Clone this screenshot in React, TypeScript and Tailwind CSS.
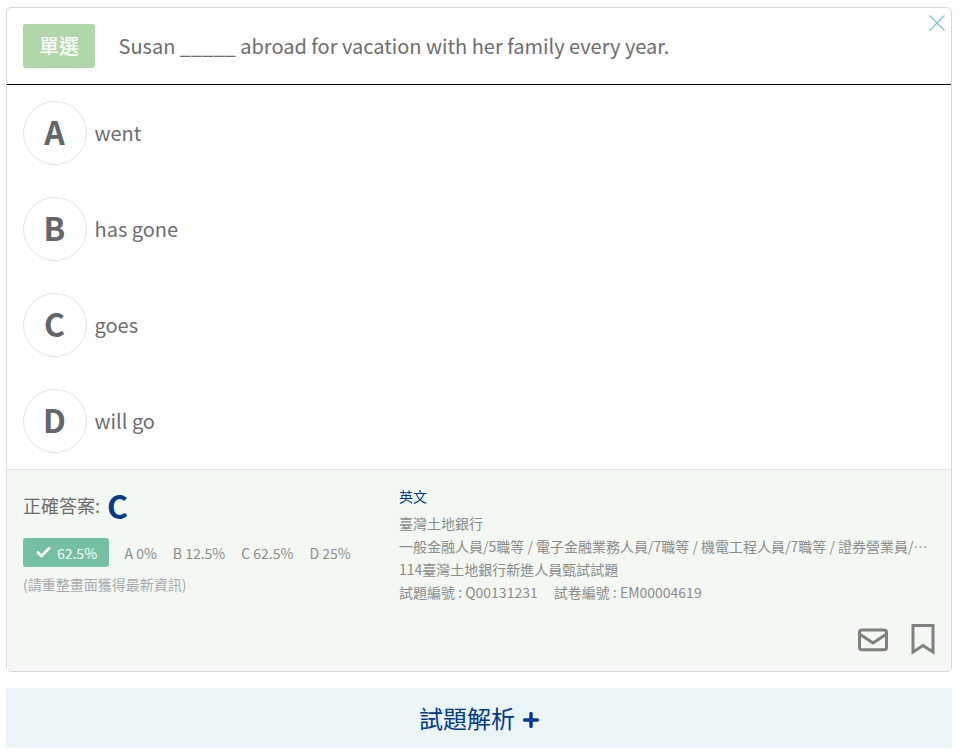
import React from 'react';
import { Check, Plus } from 'lucide-react';

const OPTIONS = [
  { key: 'A', text: 'went' },
  { key: 'B', text: 'has gone' },
  { key: 'C', text: 'goes' },
  { key: 'D', text: 'will go' },
];

const STATS = ['A 0%', 'B 12.5%', 'C 62.5%', 'D 25%'];

export default function App() {
  return (
    <div className="min-h-[756px] bg-white pt-[7px] px-[6px] w-[961px] overflow-hidden font-['Noto_Sans_CJK_TC',sans-serif]">
      <div className="relative w-[946px] border border-[#d9d9d9] rounded-[5px] overflow-hidden">
        {/* close */}
        <svg className="absolute top-[7px] right-[6px]" width="16" height="16" viewBox="0 0 16 16" fill="none" stroke="#7cc4d0" strokeWidth="1.3">
          <path d="M0.5 0.5 L15.5 15.5 M15.5 0.5 L0.5 15.5" />
        </svg>

        {/* Question */}
        <div className="flex items-center h-[77px] pl-4 border-b border-black">
          <span className="flex items-center justify-center w-[72px] h-11 rounded-[3px] bg-[#b0d6a9] text-white text-xl font-medium">單選</span>
          <span className="ml-[23.5px] text-xl text-[#6e6e6e]">Susan _____ abroad for vacation with her family every year.</span>
        </div>

        {/* Options */}
        <div className="pt-4">
          {OPTIONS.map((o) => (
            <div key={o.key} className="flex items-center h-24 pl-4 pb-8">
              <span className="flex items-center justify-center w-16 h-16 pb-[4px] pr-[1px] shrink-0 rounded-full border border-[#e3e3e3] text-[32px] font-bold text-[#63666b]">{o.key}</span>
              <span className="ml-[7.5px] text-xl text-[#6e6e6e]">{o.text}</span>
            </div>
          ))}
        </div>

        {/* Answer footer */}
        <div className="h-[202px] -mt-[16px] bg-[#f3f8f3] border-t border-[#e3e6e6] flex relative">
          <div className="w-[392px] pl-4 pt-[17px] shrink-0">
            <div className="flex items-center h-9">
              <span className="text-lg text-[#6e6e6e]">正確答案:</span>
              <span className="ml-[7px] text-[32px] leading-none font-bold text-[#003a8c]">C</span>
            </div>
            <div className="flex items-center mt-[15px] text-sm text-[#8c8c8c]">
              <span className="flex items-center justify-center w-[86px] h-[29px] rounded-[3px] bg-[#75bfa3] text-white">
                <Check className="w-[17px] h-[17px] mr-[5px]" strokeWidth={4} />
                62.5%
              </span>
              <div className="flex ml-[15.5px] gap-4">
                {STATS.map((s) => (
                  <span key={s}>{s}</span>
                ))}
              </div>
            </div>
            <div className="mt-[7px] text-sm text-[#a6aaae]">(請重整畫面獲得最新資訊)</div>
          </div>
          <div className="flex-1 min-w-0 pt-[15px] text-sm leading-[23px] text-[#8c8c8c]">
            <div className="text-[#003a8c]">英文</div>
            <div className="mt-[4px]">臺灣土地銀行</div>
            <div className="whitespace-nowrap">一般金融人員/5職等 / 電子金融業務人員/7職等 / 機電工程人員/7職等 / 證券營業員/…</div>
            <div>114臺灣土地銀行新進人員甄試試題</div>
            <div>
              試題編號 : Q00131231<span className="ml-4">試卷編號 : EM00004619</span>
            </div>
          </div>
          <div className="absolute right-4 bottom-4 flex items-center gap-[23px]">
            <svg width="30" height="24" viewBox="0 0 30 24" fill="none" stroke="#808080" strokeWidth="3" strokeLinejoin="round">
              <rect x="1.5" y="2" width="27" height="19.8" rx="2.5" />
              <path d="M1.5 6 L15 15 L28.5 6" />
            </svg>
            <svg width="24" height="31" viewBox="0 0 24 31" fill="none" stroke="#808080" strokeWidth="3" strokeLinejoin="miter">
              <path d="M2 1.5 H22 V28 L12 21.5 L2 28 Z" />
            </svg>
          </div>
        </div>
      </div>

      {/* Analysis toggle */}
      <div className="flex items-center justify-center w-[946px] h-[60px] mt-4 pl-[3px] bg-[#ebf4f7] text-[#003a8c] text-2xl">
        試題解析
        <Plus className="w-[22px] h-[22px] ml-[5px] mt-[3px]" strokeWidth={3.8} />
      </div>
    </div>
  );
}
